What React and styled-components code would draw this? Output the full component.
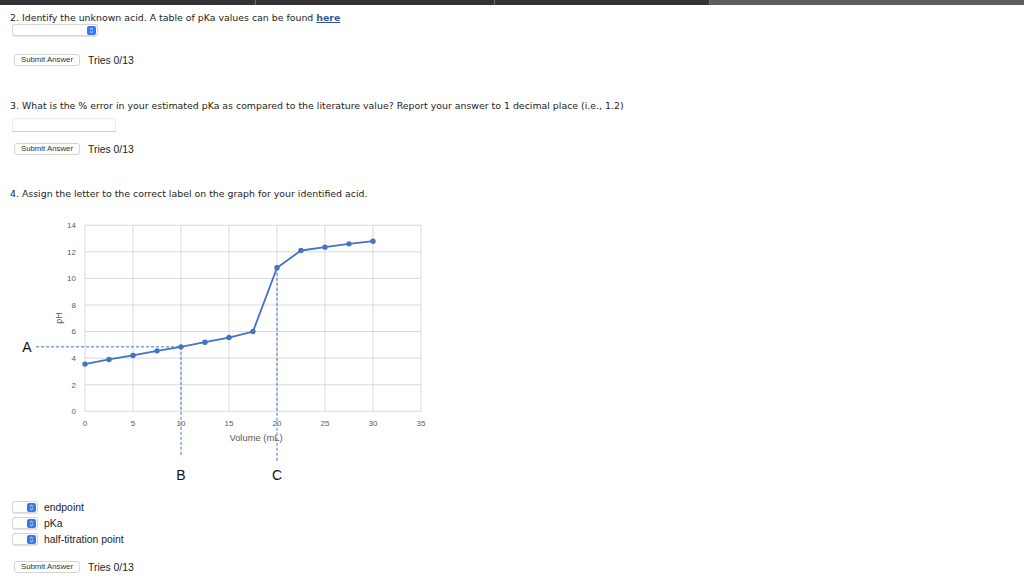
import React from 'react';
import styled, { createGlobalStyle } from 'styled-components';

const GlobalStyle = createGlobalStyle`
  body {
    margin: 0;
    background: #fff;
    font-family: 'Liberation Sans', Arial, sans-serif;
    color: #1d1d1d;
  }
`;

const TopBar = styled.div`
  display: flex;
  height: 5px;
  background: #333335;

  & > span {
    border-right: 1px solid #6e6e70;
  }
  & > span:nth-child(1) { width: 255px; }
  & > span:nth-child(2) { width: 238px; }
  & > span:nth-child(3) { width: 214px; }
  & > span:nth-child(4) {
    flex: 1;
    border-right: none;
    background: #5f5d61;
  }
`;

const Page = styled.div`
  padding: 0 10px;
`;

const Question = styled.div`
  margin-top: ${p => p.$top}px;
  font-family: 'DejaVu Sans', Verdana, sans-serif;
  font-size: 9.4px;
  line-height: 12px;
  color: #1d1d1d;

  a {
    color: #30589e;
    font-weight: bold;
    text-decoration: underline;
  }
`;

const SelectBox = styled.div`
  display: flex;
  justify-content: flex-end;
  align-items: center;
  box-sizing: border-box;
  width: ${p => p.$width}px;
  height: 12px;
  margin-left: 2px;
  padding-right: 1px;
  border: 1px solid #d6d6d6;
  border-radius: 3px;
  background: #fff;
  box-shadow: 0 0.5px 1px rgba(0, 0, 0, 0.12);
`;

const Arrow = styled.span`
  display: flex;
  flex-direction: column;
  align-items: center;
  justify-content: center;
  width: 9px;
  height: 9px;
  border-radius: 2px;
  background: #3479f0;

  svg {
    display: block;
  }
`;

const TextInput = styled.div`
  box-sizing: border-box;
  width: 104px;
  height: 14px;
  margin: 6px 0 0 2px;
  border: 1px solid #ececec;
  border-bottom-color: #cfcfcf;
`;

const SubmitRow = styled.div`
  display: flex;
  align-items: center;
  gap: 8px;
  margin-top: ${p => p.$top}px;
  margin-left: 4px;
`;

const SubmitButton = styled.button`
  box-sizing: border-box;
  width: 66px;
  height: 12px;
  padding: 0;
  border: 1px solid #d3d3d3;
  border-radius: 3px;
  background: #fff;
  font-family: 'Liberation Sans', Arial, sans-serif;
  font-size: 7.8px;
  line-height: 10px;
  color: #333;
`;

const Tries = styled.span`
  font-size: 10.4px;
  color: #1d1d1d;
`;

const Chart = styled.svg`
  display: block;
  margin-top: 12px;
`;

const Matches = styled.div`
  display: flex;
  flex-direction: column;
  gap: 4px;
  margin-top: 13px;
`;

const MatchRow = styled.div`
  display: flex;
  align-items: center;
  gap: 6px;
  font-size: 10.4px;
`;

const Chevrons = () => (
  <Arrow>
    <svg width="5" height="7" viewBox="0 0 5 7">
      <path d="M1 2.6 L2.5 1.2 L4 2.6 M1 4.4 L2.5 5.8 L4 4.4" fill="none" stroke="#fff" strokeWidth="0.9" />
    </svg>
  </Arrow>
);

const Select = ({ width }) => (
  <SelectBox $width={width}>
    <Chevrons />
  </SelectBox>
);

const Submit = ({ top }) => (
  <SubmitRow $top={top}>
    <SubmitButton>Submit Answer</SubmitButton>
    <Tries>Tries 0/13</Tries>
  </SubmitRow>
);

const data = [
  [0, 3.55], [2.5, 3.9], [5, 4.2], [7.5, 4.55], [10, 4.85], [12.5, 5.2],
  [15, 5.55], [17.5, 6.0], [20, 10.8], [22.5, 12.1], [25, 12.35], [27.5, 12.6], [30, 12.8]
];

const X0 = 85;
const Y0 = 411.3;
const px = v => X0 + v * 9.6;
const py = v => Y0 - v * 13.29;
const chartFont = "'Liberation Sans', Arial, sans-serif";

const TitrationChart = () => {
  const points = data.map(([x, y]) => `${px(x)},${py(y)}`).join(' ');
  return (
    <Chart width="430" height="276" viewBox="10 212 430 276">
      {[0, 2, 4, 6, 8, 10, 12, 14].map(v => (
        <g key={`y${v}`}>
          <line x1={X0} x2={px(35)} y1={py(v)} y2={py(v)} stroke="#d9d9d9" strokeWidth="1" />
          <text x="76" y={py(v) + 2.8} textAnchor="end" fontSize="8" fill="#595959" fontFamily={chartFont}>{v}</text>
        </g>
      ))}
      {[0, 5, 10, 15, 20, 25, 30, 35].map(v => (
        <g key={`x${v}`}>
          <line x1={px(v)} x2={px(v)} y1={py(14)} y2={Y0} stroke="#d9d9d9" strokeWidth="1" />
          <text x={px(v)} y="426" textAnchor="middle" fontSize="8" fill="#595959" fontFamily={chartFont}>{v}</text>
        </g>
      ))}
      <text x="256" y="441" textAnchor="middle" fontSize="9.4" fill="#595959" fontFamily={chartFont}>Volume (mL)</text>
      <text x="62" y="318" transform="rotate(-90 62 318)" textAnchor="middle" fontSize="9" fill="#595959" fontFamily={chartFont}>pH</text>

      <g stroke="#4472c4" strokeWidth="1" strokeDasharray="3 2" fill="none">
        <line x1="36" x2={px(10)} y1={py(4.85)} y2={py(4.85)} />
        <line x1={px(10)} x2={px(10)} y1={py(4.85)} y2="456" />
        <line x1={px(20)} x2={px(20)} y1={py(10.8)} y2="461" />
      </g>

      <polyline points={points} fill="none" stroke="#4472c4" strokeWidth="1.8" strokeLinejoin="round" />
      {data.map(([x, y]) => (
        <circle key={x} cx={px(x)} cy={py(y)} r="2.7" fill="#4472c4" />
      ))}

      <g fontFamily={chartFont} fontSize="14" fill="#111" textAnchor="middle">
        <text x="27" y="352">A</text>
        <text x={px(10)} y="480">B</text>
        <text x={px(20)} y="480">C</text>
      </g>
    </Chart>
  );
};

export default function App() {
  return (
    <>
      <GlobalStyle />
      <TopBar>
        <span />
        <span />
        <span />
        <span />
      </TopBar>
      <Page>
        <Question $top={7}>
          2. Identify the unknown acid. A table of pKa values can be found <a href="#">here</a>
        </Question>
        <Select width={86} />
        <Submit top={18} />

        <Question $top={34}>
          3. What is the % error in your estimated pKa as compared to the literature value? Report your answer to 1 decimal place (i.e., 1.2)
        </Question>
        <TextInput />
        <Submit top={11} />

        <Question $top={33}>
          4. Assign the letter to the correct label on the graph for your identified acid.
        </Question>
        <TitrationChart />

        <Matches>
          <MatchRow><Select width={26} />endpoint</MatchRow>
          <MatchRow><Select width={26} />pKa</MatchRow>
          <MatchRow><Select width={26} />half-titration point</MatchRow>
        </Matches>
        <Submit top={16} />
      </Page>
    </>
  );
}
